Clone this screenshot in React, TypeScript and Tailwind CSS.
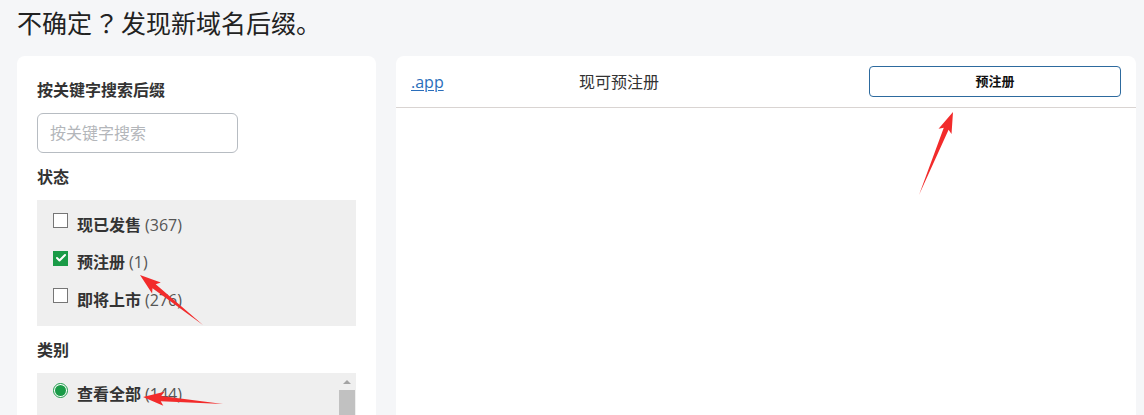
import React from 'react';
import { Check } from 'lucide-react';

const font = { fontFamily: '"Open Sans", "Noto Sans CJK SC", sans-serif' };

type Pt = [number, number];

// red annotation arrow, drawn from tail to tip
const Arrow: React.FC<{ tail: Pt; tip: Pt }> = ({ tail, tip }) => {
  const dx = tip[0] - tail[0];
  const dy = tip[1] - tail[1];
  const L = Math.hypot(dx, dy);
  const ang = (Math.atan2(dy, dx) * 180) / Math.PI;
  const h = 18;
  const pts = [
    [0, 0],
    [L - h, -2.6],
    [L - h - 3, -7],
    [L, 0],
    [L - h - 3, 7],
    [L - h, 2.6],
  ]
    .map(p => p.join(','))
    .join(' ');
  return (
    <polygon
      points={pts}
      fill="#f22b2b"
      transform={`translate(${tail[0]} ${tail[1]}) rotate(${ang})`}
    />
  );
};

const statuses = [
  { label: '现已发售', count: 367, checked: false },
  { label: '预注册', count: 1, checked: true },
  { label: '即将上市', count: 276, checked: false },
];

export default function App() {
  return (
    <div className="relative w-[1144px] h-[415px] overflow-hidden bg-[#f5f6f8] text-[#333]" style={font}>
      <h1
        className="px-[17px] pt-[5px] text-[25px] leading-[34px] text-[#222]"
        style={{ fontFamily: '"Noto Sans CJK SC", sans-serif' }}
      >
        不确定<span className="mx-[2px]" style={{ fontFamily: '"Noto Sans CJK TC", sans-serif' }}>？</span>发现新域名后缀。
      </h1>

      <div className="flex gap-5 px-[17px] mt-[17px]">
        {/* Filters */}
        <div className="w-[359px] h-[420px] shrink-0 bg-white rounded-lg px-5 pt-[22px]">
          <div className="text-base font-semibold leading-6">按关键字搜索后缀</div>
          <input
            placeholder="按关键字搜索"
            className="mt-[11px] w-[201px] h-10 rounded-md border border-[#b7bcc2] px-3 text-base placeholder:text-[#b3b6ba] outline-none"
          />
          <div className="mt-3 text-base font-semibold leading-6">状态</div>

          <div className="mt-[11px] bg-[#efefef] pt-[6px] pb-[7px] pl-4">
            {statuses.map(s => (
              <div key={s.label} className="flex items-center h-[37.5px]">
                {s.checked ? (
                  <span className="w-[15px] h-[15px] bg-[#1a9b47] flex items-center justify-center -mt-2">
                    <Check className="w-3 h-3 text-white" strokeWidth={4} />
                  </span>
                ) : (
                  <span className="w-[15px] h-[15px] border border-[#767676] bg-white -mt-2" />
                )}
                <span className="ml-[9px] text-base font-semibold text-[#333]">{s.label}</span>
                <span className="ml-1 text-base text-[#555]">({s.count})</span>
              </div>
            ))}
          </div>

          <div className="mt-[12px] text-base font-semibold leading-6">类别</div>

          <div className="mt-[11px] bg-[#efefef] h-[60px] pl-4 flex">
            <div className="flex-1 flex items-start pt-[10px]">
              <span className="w-[15px] h-[15px] rounded-full border border-[#1a9b47] bg-white flex items-center justify-center">
                <span className="w-[11px] h-[11px] rounded-full bg-[#1a9b47]" />
              </span>
              <span className="ml-[9px] -mt-[1px] text-base font-semibold leading-6">查看全部</span>
              <span className="ml-1 -mt-[1px] text-base leading-6 text-[#555]">(144)</span>
            </div>
            <div className="w-[17px] mr-[1px] flex flex-col items-center pt-[7px]">
              <span className="w-0 h-0 border-l-[4px] border-r-[4px] border-b-[4px] border-l-transparent border-r-transparent border-b-[#a3a3a3]" />
              <span className="mt-[6px] w-[16px] h-[40px] bg-[#c1c1c1]" />
            </div>
          </div>
        </div>

        {/* Results */}
        <div className="w-[740px] h-[420px] shrink-0 bg-white rounded-lg">
          <div className="flex items-center h-[52px] border-b border-[#d9d4d2] px-[15px]">
            <a href="#" className="w-[168px] text-base text-[#2a6ebb] underline underline-offset-2">.app</a>
            <span className="w-[290px] text-base text-[#333]">现可预注册</span>
            <button className="w-[252px] h-[31px] border border-[#2d6a9e] rounded text-[13px] font-bold text-[#111]">
              预注册
            </button>
          </div>
        </div>
      </div>

      <svg className="absolute inset-0 pointer-events-none" width="1144" height="415">
        <Arrow tail={[203, 325]} tip={[140, 275]} />
        <Arrow tail={[223, 404]} tip={[143, 397]} />
        <Arrow tail={[919, 195]} tip={[953, 112]} />
      </svg>
    </div>
  );
}
